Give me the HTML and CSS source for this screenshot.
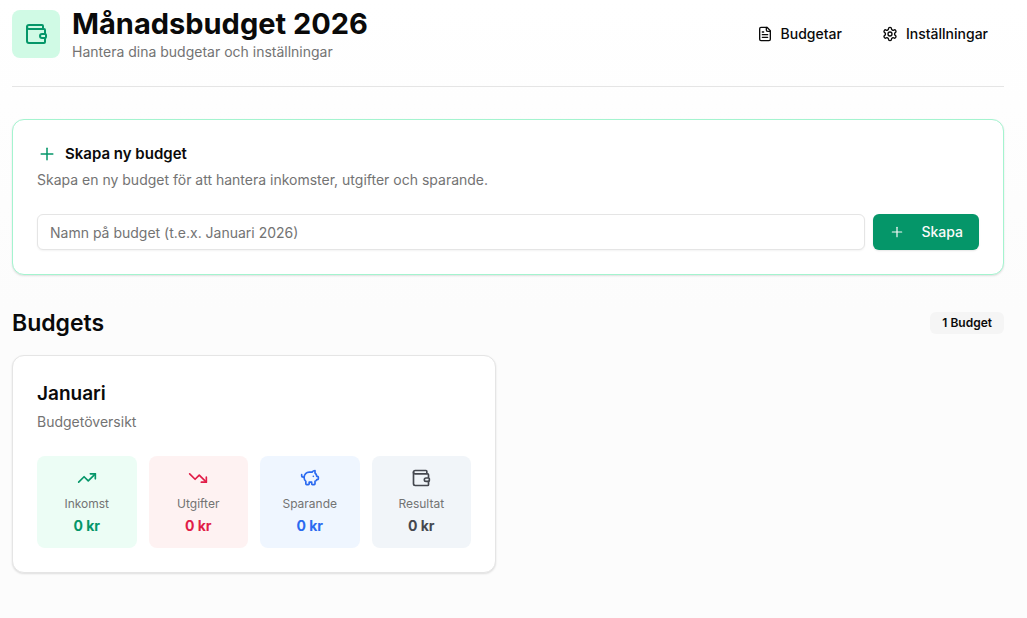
FILE: index.html
```html
<!DOCTYPE html>
<html lang="sv">
<head>
<meta charset="utf-8">
<meta name="viewport" content="width=device-width, initial-scale=1">
<title>Månadsbudget 2026</title>
<link rel="stylesheet" href="styles.css">
</head>
<body>
<svg class="sprite" aria-hidden="true">
  <symbol id="wallet" viewBox="0 0 24 24"><path d="M19 7V4a1 1 0 0 0-1-1H5a2 2 0 0 0 0 4h15a1 1 0 0 1 1 1v4h-3a2 2 0 0 0 0 4h3a1 1 0 0 0 1-1v-2a1 1 0 0 0-1-1"/><path d="M3 5v14a2 2 0 0 0 2 2h15a1 1 0 0 0 1-1v-4"/></symbol>
  <symbol id="plus" viewBox="0 0 24 24"><path d="M5 12h14"/><path d="M12 5v14"/></symbol>
</svg>
<div class="page">
  <header class="header">
    <div class="brand">
      <div class="brand-icon"><svg class="icon icon-lg"><use href="#wallet"/></svg></div>
      <div>
        <h1 class="title">Månadsbudget 2026</h1>
        <p class="muted">Hantera dina budgetar och inställningar</p>
      </div>
    </div>
    <nav class="nav">
      <a class="nav-link" href="#budgets"><svg class="icon icon-sm" viewBox="0 0 24 24"><path d="M15 2H6a2 2 0 0 0-2 2v16a2 2 0 0 0 2 2h12a2 2 0 0 0 2-2V7Z"/><path d="M14 2v4a2 2 0 0 0 2 2h4"/><path d="M10 9H8"/><path d="M16 13H8"/><path d="M16 17H8"/></svg>Budgetar</a>
      <a class="nav-link" href="#settings"><svg class="icon icon-sm" viewBox="0 0 24 24"><path d="M12.22 2h-.44a2 2 0 0 0-2 2v.18a2 2 0 0 1-1 1.73l-.43.25a2 2 0 0 1-2 0l-.15-.08a2 2 0 0 0-2.73.73l-.22.38a2 2 0 0 0 .73 2.73l.15.1a2 2 0 0 1 1 1.72v.51a2 2 0 0 1-1 1.74l-.15.09a2 2 0 0 0-.73 2.73l.22.38a2 2 0 0 0 2.73.73l.15-.08a2 2 0 0 1 2 0l.43.25a2 2 0 0 1 1 1.73V20a2 2 0 0 0 2 2h.44a2 2 0 0 0 2-2v-.18a2 2 0 0 1 1-1.73l.43-.25a2 2 0 0 1 2 0l.15.08a2 2 0 0 0 2.73-.73l.22-.39a2 2 0 0 0-.73-2.73l-.15-.08a2 2 0 0 1-1-1.74v-.5a2 2 0 0 1 1-1.74l.15-.09a2 2 0 0 0 .73-2.73l-.22-.38a2 2 0 0 0-2.73-.73l-.15.08a2 2 0 0 1-2 0l-.43-.25a2 2 0 0 1-1-1.73V4a2 2 0 0 0-2-2z"/><circle cx="12" cy="12" r="3"/></svg>Inställningar</a>
    </nav>
  </header>

  <main class="content">
    <section class="card card-create">
      <h2 class="create-title"><svg class="icon icon-md icon-plus green"><use href="#plus"/></svg>Skapa ny budget</h2>
      <p class="muted create-text">Skapa en ny budget för att hantera inkomster, utgifter och sparande.</p>
      <form class="create-form">
        <input class="field" type="text" aria-label="Namn på budget" placeholder="Namn på budget (t.e.x. Januari 2026)">
        <button class="button" type="button"><svg class="icon icon-sm icon-plus"><use href="#plus"/></svg>Skapa</button>
      </form>
    </section>

    <section class="budgets" id="budgets">
      <div class="section-head">
        <h2 class="section-title">Budgets</h2>
        <span class="badge">1 Budget</span>
      </div>
      <div class="grid">
        <article class="card">
          <h3 class="card-title">Januari</h3>
          <p class="muted card-text">Budgetöversikt</p>
          <div class="stats">
            <div class="stat stat-income"><svg class="icon icon-md" viewBox="0 0 24 24"><path d="M16 7h6v6"/><path d="m22 7-8.500 8.500-5-5L2 17"/></svg><span class="stat-label">Inkomst</span><strong class="stat-value">0 kr</strong></div>
            <div class="stat stat-expense"><svg class="icon icon-md" viewBox="0 0 24 24"><path d="M16 17h6v-6"/><path d="m22 17-8.500-8.500-5 5L2 7"/></svg><span class="stat-label">Utgifter</span><strong class="stat-value">0 kr</strong></div>
            <div class="stat stat-saving"><svg class="icon icon-md" viewBox="0 0 24 24"><path d="M11 17h3v2a1 1 0 0 0 1 1h2a1 1 0 0 0 1-1v-3a3.160 3.160 0 0 0 2-2h1a1 1 0 0 0 1-1v-2a1 1 0 0 0-1-1h-1a5 5 0 0 0-2-4V3a4 4 0 0 0-3.200 1.600l-.3.400H11a6 6 0 0 0-6 6v1a5 5 0 0 0 2 4v3a1 1 0 0 0 1 1h2a1 1 0 0 0 1-1z"/><path d="M16 10h.01"/><path d="M2 8v1a2 2 0 0 0 2 2h1"/></svg><span class="stat-label">Sparande</span><strong class="stat-value">0 kr</strong></div>
            <div class="stat stat-result"><svg class="icon icon-md"><use href="#wallet"/></svg><span class="stat-label">Resultat</span><strong class="stat-value">0 kr</strong></div>
          </div>
        </article>
      </div>
    </section>
  </main>
</div>
</body>
</html>
```
FILE: styles.css
```css
*, *::before, *::after { box-sizing: border-box; }
body {
  margin: 0;
  min-height: 100vh;
  background: linear-gradient(#ffffff, #fcfcfc 50%);
  color: #0a0a0a;
  font-family: Inter, "Liberation Sans", sans-serif;
  font-size: 14px;
  line-height: 20px;
}
h1, h2, h3, p { margin: 0; }
.sprite { display: none; }
.page { padding: 6px 23px 32px 12px; }

.icon {
  flex: none;
  fill: none;
  stroke: currentColor;
  stroke-width: 2;
  stroke-linecap: round;
  stroke-linejoin: round;
}
.icon-sm { width: 16px; height: 16px; }
.icon-md { width: 20px; height: 20px; }
.icon-lg { width: 24px; height: 24px; }
.icon-plus { stroke-width: 1.8; }
.green { color: #059669; }
.muted { color: #737373; }

.header {
  display: flex;
  align-items: center;
  justify-content: space-between;
  padding-bottom: 24px;
  border-bottom: 1px solid #e5e5e5;
}
.brand { display: flex; align-items: center; gap: 12px; }
.brand-icon {
  display: flex;
  padding: 12px;
  border-radius: 8px;
  background: #d0fae5;
  color: #059669;
}
.title { font-size: 29px; line-height: 36px; font-weight: 700; }
.nav { display: flex; gap: 8px; }
.nav-link {
  display: flex;
  align-items: center;
  gap: 8px;
  padding: 8px 16px;
  color: inherit;
  font-weight: 500;
  text-decoration: none;
}

.content { display: grid; gap: 32px; padding-top: 32px; }
.card {
  padding: 24px;
  border: 1px solid #e5e5e5;
  border-radius: 12px;
  background: #ffffff;
  box-shadow: 0 1px 2px rgb(0 0 0 / 12%);
}
.card-create { border-color: #a4f4cf; }
.create-title {
  display: flex;
  align-items: center;
  gap: 8px;
  font-size: 15px;
  line-height: 20px;
  font-weight: 600;
}
.create-text { margin-top: 6px; }
.create-form { display: flex; gap: 8px; margin-top: 24px; }
.field {
  flex: 1;
  min-width: 0;
  height: 36px;
  padding: 4px 12px;
  border: 1px solid #e5e5e5;
  border-radius: 6px;
  background: #ffffff;
  box-shadow: 0 1px 2px rgb(0 0 0 / 5%);
  color: inherit;
  font: inherit;
}
.field::placeholder { color: #737373; opacity: 1; }
.button {
  display: flex;
  align-items: center;
  gap: 16px;
  height: 36px;
  padding: 8px 16px;
  border: 0;
  border-radius: 6px;
  background: #059669;
  box-shadow: 0 1px 2px rgb(0 0 0 / 10%);
  color: #fafafa;
  font: inherit;
  font-weight: 500;
}

.budgets { display: grid; gap: 16px; }
.section-head { display: flex; align-items: center; justify-content: space-between; }
.section-title { font-size: 23px; line-height: 32px; font-weight: 600; }
.badge {
  padding: 3px 12px;
  border-radius: 6px;
  background: #f5f5f5;
  font-size: 12px;
  line-height: 16px;
  font-weight: 600;
}
.grid { display: grid; grid-template-columns: repeat(2, minmax(0, 1fr)); gap: 24px; }
.card-title { font-size: 19px; line-height: 28px; font-weight: 600; }
.card-text { margin-top: 4px; }
.stats { display: grid; grid-template-columns: repeat(4, minmax(0, 1fr)); gap: 12px; margin-top: 24px; }
.stat {
  display: flex;
  flex-direction: column;
  align-items: center;
  padding: 12px;
  border-radius: 8px;
}
.stat-label { margin-top: 8px; color: #737373; font-size: 12px; line-height: 16px; }
.stat-value { margin-top: 4px; font-weight: 700; }
.stat-income { background: #ecfdf5; color: #059669; }
.stat-expense { background: #fef2f2; color: #e11d48; }
.stat-saving { background: #eff6ff; color: #2b6af0; }
.stat-result { background: #f1f5f9; color: #45484f; }
```
